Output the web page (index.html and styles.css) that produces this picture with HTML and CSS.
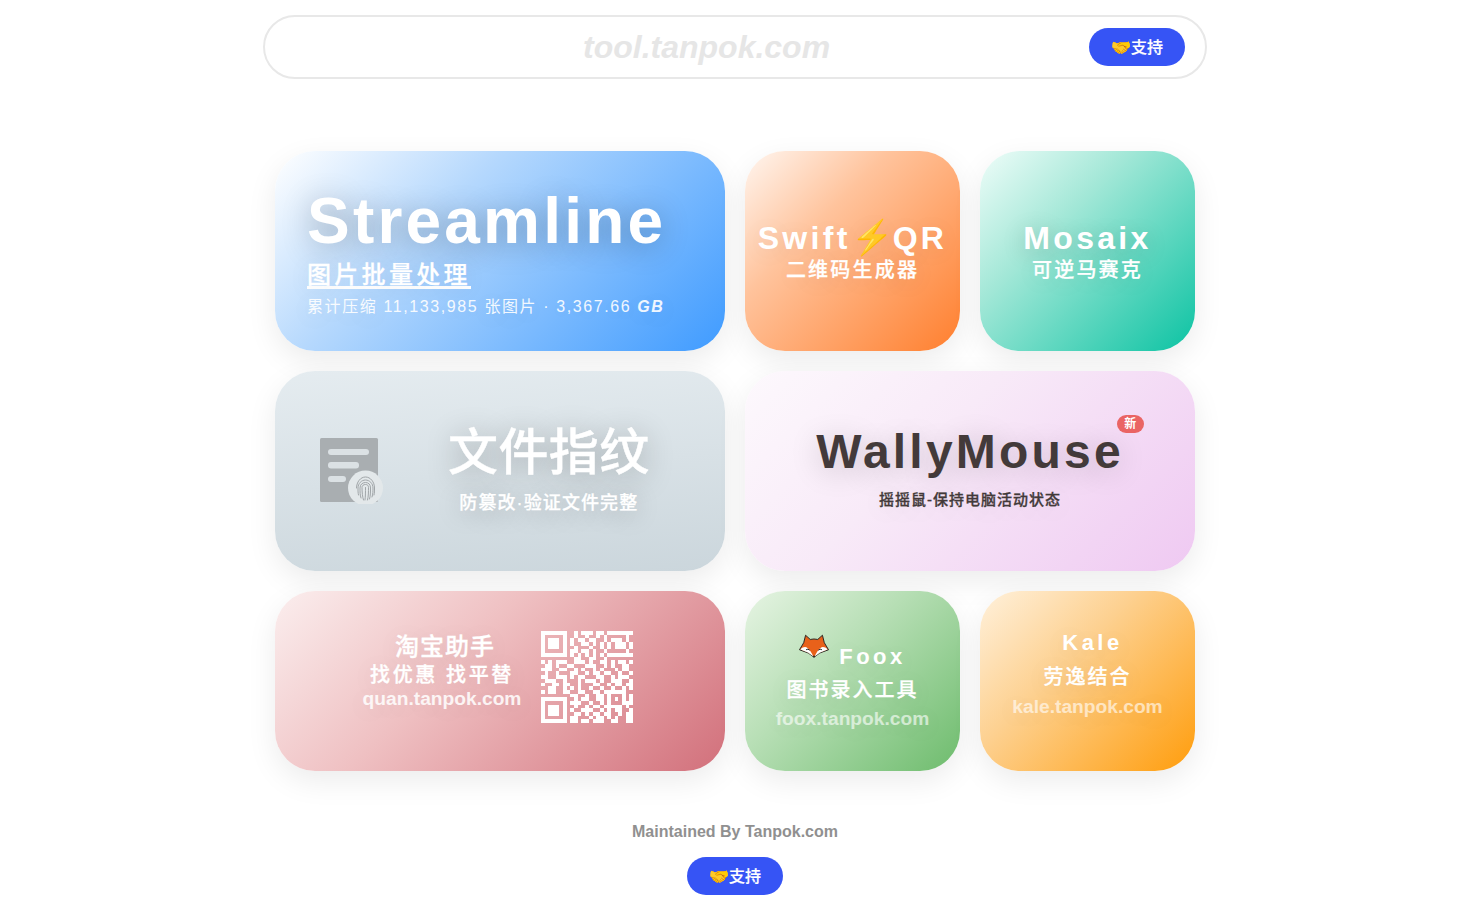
FILE: index.html
```html
<!DOCTYPE html>
<html lang="zh">
<head>
    <meta charset="utf-8" />
    <title>tool.tanpok.com</title>
    <link rel="stylesheet" href="styles.css">
</head>
<body>
    <header class="top-bar">
        <div class="site-name">tool.tanpok.com</div>
        <a class="support-btn">🤝支持</a>
    </header>

    <main class="tool-grid">
        <a class="card card-wide card-streamline">
            <div class="streamline-title">Streamline</div>
            <div class="streamline-sub">图片批量处理</div>
            <div class="streamline-stat">累计压缩 11,133,985 张图片 · 3,367.66 <b>GB</b></div>
        </a>

        <a class="card card-small card-swift">
            <div class="small-title">Swift<span class="bolt">⚡</span>QR</div>
            <div class="small-sub">二维码生成器</div>
        </a>

        <a class="card card-small card-mosaix">
            <div class="small-title">Mosaix</div>
            <div class="small-sub">可逆马赛克</div>
        </a>

        <a class="card card-wide card-hash">
            <svg class="hash-icon" viewBox="0 0 66 66">
                <rect x="0" y="0" width="58" height="64" rx="1.5" fill="#a9aeb1"/>
                <rect x="8" y="11" width="41" height="6" rx="3" fill="#dbe1e4"/>
                <rect x="8" y="24" width="31" height="6.500" rx="3" fill="#dbe1e4"/>
                <rect x="8" y="38" width="18" height="6" rx="3" fill="#dbe1e4"/>
                <circle cx="45.500" cy="50" r="17.500" fill="#e3e8ea"/>
                <g fill="none" stroke="#a0a5a8" stroke-width="1" stroke-linecap="round">
                    <path d="M36.500 50c0-6 4-11 9-11s9 5 9 11c0 3 0 5-.5 7"/>
                    <path d="M38.500 57c-.5-2-.5-4-.5-7 0-4.500 3.500-8 7.500-8s7.500 3.500 7.500 8c0 3 0 6-1 9"/>
                    <path d="M41 60c-1-3-1-6-1-10 0-3.500 2.500-5.500 5.500-5.500s5 2 5 5.500c0 4 0 8-1 11"/>
                    <path d="M43.500 62c-1-3-1.500-8-1.500-12.500 0-2 1.500-3 3.500-3s3 1 3 3c0 4 0 9-1 12.500"/>
                    <path d="M45.500 49.500c0 4 0 9-.5 12.500"/>
                </g>
            </svg>
            <div class="hash-text">
                <div class="hash-title">文件指纹</div>
                <div class="hash-sub">防篡改·验证文件完整</div>
            </div>
        </a>

        <a class="card card-wide card-wally">
            <div class="wally-title">WallyMouse<span class="new-badge">新</span></div>
            <div class="wally-sub">摇摇鼠-保持电脑活动状态</div>
        </a>

        <a class="card card-wide card-quan">
            <div class="quan-text">
                <div class="quan-title">淘宝助手</div>
                <div class="quan-sub">找优惠 找平替</div>
                <div class="site-link">quan.tanpok.com</div>
            </div>
            <svg class="quan-qr" viewBox="0 0 25 25" shape-rendering="crispEdges">
                <path fill="none" stroke="#fff" d="M0 .5h7m2 0h1m1 0h3m1 0h2m1 0h7M0 1.500h1m5 0h1m2 0h1m2 0h1m2 0h1m1 0h1m5 0h1M0 2.500h1m1 0h3m1 0h1m1 0h1m1 0h2m1 0h2m2 0h1m1 0h3m1 0h1M0 3.500h1m1 0h3m1 0h1m1 0h1m2 0h2m1 0h1m1 0h1m1 0h1m1 0h3m1 0h1M0 4.500h1m1 0h3m1 0h1m2 0h1m3 0h1m2 0h1m1 0h1m1 0h3m1 0h1M0 5.500h1m5 0h1m1 0h2m1 0h2m1 0h1m2 0h1m5 0h1M0 6.500h7m1 0h1m1 0h1m1 0h1m1 0h1m1 0h1m1 0h7M9 7.500h2m2 0h2m2 0h1M0 8.500h1m1 0h1m1 0h3m2 0h3m1 0h1m2 0h2m1 0h1m1 0h2m1 0h1M1 9.500h2m1 0h1m2 0h2m3 0h3m2 0h1m1 0h1m2 0h2M0 10.500h3m2 0h2m2 0h1m1 0h1m2 0h1m1 0h1m3 0h1m1 0h2M1 11.500h1m2 0h1m3 0h2m2 0h1m1 0h2m1 0h2m2 0h1m2 0h1M0 12.500h2m2 0h3m1 0h1m1 0h2m3 0h2m2 0h1m1 0h3M1 13.500h3m2 0h1m3 0h1m1 0h3m1 0h1m2 0h3m2 0h1M0 14.500h1m2 0h2m1 0h2m2 0h1m3 0h2m2 0h1m1 0h2m1 0h2M2 15.500h2m2 0h1m1 0h1m1 0h1m2 0h1m2 0h1m2 0h1m2 0h1m1 0h1M0 16.500h1m1 0h2m2 0h2m2 0h2m2 0h2m1 0h6M8 17.500h2m2 0h1m2 0h2m1 0h1m3 0h1m1 0h2M0 18.500h7m2 0h1m1 0h2m2 0h2m1 0h1m1 0h1m1 0h1m1 0h1M0 19.500h1m5 0h1m1 0h3m2 0h1m2 0h1m1 0h1m3 0h3M0 20.500h1m1 0h3m1 0h1m2 0h1m2 0h1m1 0h2m1 0h5m1 0h1M0 21.500h1m1 0h3m1 0h1m1 0h1m2 0h3m2 0h1m1 0h1m1 0h2m2 0h1M0 22.500h1m1 0h3m1 0h1m2 0h2m1 0h1m1 0h2m1 0h2m2 0h1m1 0h2M0 23.500h1m5 0h1m1 0h2m3 0h1m1 0h2m1 0h1m1 0h1m2 0h2M0 24.500h7m1 0h2m1 0h2m1 0h3m2 0h2m2 0h2"/>
            </svg>
        </a>

        <a class="card card-small card-foox">
            <div class="foox-title">
                <svg class="fox-icon" viewBox="0 0 32 26">
                    <path d="M7 1.500l5 4.500q4-1 8 0l5-4.500 2 8 4.500 7.500-9.500 3.500-6 4.500-6-4.500L.5 17 5 9.500z" fill="#e8611a" stroke="#222" stroke-width="1" stroke-linejoin="round"/>
                    <path d="M1.500 16.700C4 14 7 13.500 9 15c2.500 2 4.500 5 6.500 9.500L10 20.300zM30.500 16.700C28 14 25 13.500 23 15c-2.500 2-4.500 5-6.500 9.500L22 20.300z" fill="#fff"/>
                    <path d="M7.500 17q2-1.500 4 .5M24.500 17q-2-1.500-4 .5" fill="none" stroke="#222" stroke-width="1"/>
                    <path d="M14.500 23.500h3L16 25.500z" fill="#222"/>
                </svg>
                <span>Foox</span>
            </div>
            <div class="foox-sub">图书录入工具</div>
            <div class="site-link">foox.tanpok.com</div>
        </a>

        <a class="card card-small card-kale">
            <div class="kale-title">Kale</div>
            <div class="foox-sub">劳逸结合</div>
            <div class="site-link">kale.tanpok.com</div>
        </a>
    </main>

    <footer class="page-foot">
        <div class="maintained">Maintained By Tanpok.com</div>
        <a class="support-btn">🤝支持</a>
    </footer>
</body>
</html>
```

FILE: styles.css
```css
* {
    box-sizing: border-box;
}

body {
    margin: 0;
    background: #fff;
    font-family: 'Liberation Sans', 'Noto Sans CJK SC', sans-serif;
    display: flex;
    flex-direction: column;
    align-items: center;
}

.top-bar {
    width: 944px;
    height: 64px;
    margin-top: 15px;
    border: 2px solid #e8e8e8;
    border-radius: 32px;
    display: flex;
    align-items: center;
    justify-content: space-between;
    padding: 0 20px 0 318px;
}

.site-name {
    font-size: 32px;
    font-weight: bold;
    font-style: italic;
    color: #e6e6e6;
}

.support-btn {
    display: block;
    width: 96px;
    height: 38px;
    line-height: 40px;
    border-radius: 19px;
    background: #3654f5;
    color: #fff;
    font-size: 16px;
    font-weight: 500;
    -webkit-text-stroke: 0.2px #fff;
    text-align: center;
}

.tool-grid {
    width: 920px;
    margin-top: 72px;
    display: grid;
    grid-template-columns: repeat(4, 215px);
    grid-template-rows: 200px 200px 180px;
    gap: 20px;
}

.card {
    border-radius: 40px;
    color: #fff;
    font-weight: bold;
    display: flex;
    flex-direction: column;
    align-items: center;
    justify-content: center;
    box-shadow: 0 10px 30px rgba(0, 0, 0, 0.08);
    text-shadow: 0 4px 24px rgba(0, 0, 0, 0.1);
}

.card-wide {
    grid-column: span 2;
}

.card-streamline {
    align-items: flex-start;
    padding: 2px 0 0 32px;
    background: linear-gradient(135deg, #fff 0%, #b5d8fd 35%, #3f9bff 100%);
}

.streamline-title {
    font-size: 64px;
    line-height: 70px;
    letter-spacing: 3.2px;
    text-shadow: 0 4px 30px rgba(0, 0, 0, 0.3);
}

.streamline-sub {
    margin-top: 8px;
    font-size: 24px;
    line-height: 22px;
    letter-spacing: 3.3px;
    font-weight: 500;
    -webkit-text-stroke: 0.25px #fff;
    border-bottom: 3px solid #fff;
}

.streamline-stat {
    margin-top: 7px;
    font-size: 16px;
    line-height: 22px;
    letter-spacing: 1.6px;
    font-weight: normal;
    opacity: 0.9;
}

.streamline-stat b {
    font-style: italic;
}

.small-title {
    font-size: 32px;
    line-height: 36px;
    margin-bottom: 2px;
    letter-spacing: 3.3px;
    white-space: nowrap;
    text-shadow: 0 4px 24px rgba(0, 0, 0, 0.2);
}

.small-sub {
    font-size: 20px;
    line-height: 24px;
    letter-spacing: 2.2px;
    font-weight: 500;
    -webkit-text-stroke: 0.25px #fff;
}

.bolt {
    font-size: 34px;
    line-height: 0;
    font-weight: normal;
    letter-spacing: 0;
}

.card-swift {
    background: linear-gradient(135deg, #fff6f0 0%, #ffc39c 35%, #ff7f2e 100%);
}

.card-swift .small-title {
    text-shadow: 0 4px 24px rgba(0, 0, 0, 0.08);
}

.card-mosaix {
    background: linear-gradient(135deg, #effdf9 0%, #a5e8d8 35%, #0cc3a3 100%);
}

.card-hash {
    flex-direction: row;
    justify-content: flex-start;
    padding-left: 45px;
    background: linear-gradient(175deg, #e5ecf0 0%, #cbd6dc 100%);
}

.hash-icon {
    width: 66px;
    height: 66px;
    flex: none;
}

.hash-text {
    margin: 0 0 4px 62px;
    text-align: center;
}

.hash-title {
    font-size: 50px;
    line-height: 60px;
    letter-spacing: 0.4px;
    font-weight: 500;
    -webkit-text-stroke: 0.4px #fff;
    text-shadow: 0 4px 30px rgba(0, 0, 0, 0.3);
}

.hash-sub {
    margin-top: 8px;
    font-size: 18px;
    line-height: 24px;
    letter-spacing: 1.1px;
    font-weight: 500;
    -webkit-text-stroke: 0.25px #fff;
    text-shadow: 0 4px 24px rgba(0, 0, 0, 0.25);
}

.card-wally {
    padding-bottom: 8px;
    color: #433a3a;
    background: linear-gradient(135deg, #fdf9fd 0%, #f8eaf8 40%, #efc9f2 100%);
}

.wally-title {
    position: relative;
    font-size: 48px;
    line-height: 56px;
    letter-spacing: 3.2px;
    text-shadow: 0 4px 30px rgba(0, 0, 0, 0.2);
}

.wally-sub {
    margin-top: 9px;
    font-size: 15px;
    line-height: 22px;
    letter-spacing: 1px;
    font-weight: 500;
    -webkit-text-stroke: 0.3px #433a3a;
}

.new-badge {
    position: absolute;
    right: -20px;
    top: -9px;
    width: 27px;
    height: 18px;
    line-height: 18px;
    border-radius: 9px;
    background: #ea6464;
    color: #fff;
    font-size: 12px;
    font-weight: bold;
    text-align: center;
    letter-spacing: 0;
    text-shadow: none;
}

.card-quan {
    flex-direction: row;
    gap: 20px;
    padding-bottom: 8px;
    background: linear-gradient(135deg, #fbeeee 0%, #efc0c2 40%, #d2707b 100%);
}

.quan-text {
    text-align: center;
    margin: 0 0 12px -4px;
}

.quan-title {
    padding-left: 6px;
    font-size: 24px;
    line-height: 30px;
    letter-spacing: 1px;
    font-weight: 500;
    -webkit-text-stroke: 0.3px #fff;
}

.quan-sub {
    font-size: 20px;
    line-height: 26px;
    letter-spacing: 2.6px;
    font-weight: 500;
    -webkit-text-stroke: 0.3px #fff;
}

.site-link {
    font-size: 19.2px;
    line-height: 22px;
    opacity: 0.6;
}

.card-quan .site-link {
    opacity: 0.85;
}

.quan-qr {
    width: 92px;
    height: 92px;
    flex: none;
}

.card-foox {
    padding-top: 1px;
    background: linear-gradient(135deg, #e6f4e3 0%, #b8dfb6 40%, #6ebc6d 100%);
}

.foox-title {
    display: flex;
    align-items: flex-start;
    gap: 10px;
    font-size: 22px;
    letter-spacing: 3.5px;
}

.foox-title span {
    margin-top: 11px;
}

.fox-icon {
    width: 30px;
    height: 26px;
}

.foox-sub {
    margin-top: 5px;
    font-size: 20px;
    line-height: 30px;
    letter-spacing: 2px;
    font-weight: 500;
    -webkit-text-stroke: 0.25px #fff;
}

.card-foox .site-link {
    margin-top: 3px;
}

.card-kale {
    padding-bottom: 14px;
    background: linear-gradient(135deg, #fff1dc 0%, #fdd08f 40%, #ff9d0c 100%);
}

.card-kale .foox-sub {
    margin-top: 6px;
}

.card-kale .site-link {
    margin-top: 4px;
}

.kale-title {
    padding-left: 10px;
    font-size: 22px;
    line-height: 26px;
    letter-spacing: 3.5px;
}

.page-foot {
    margin-top: 52px;
    margin-bottom: 28px;
    display: flex;
    flex-direction: column;
    align-items: center;
    gap: 16px;
}

.maintained {
    font-size: 16px;
    line-height: 18px;
    font-weight: bold;
    color: #909090;
}
```
